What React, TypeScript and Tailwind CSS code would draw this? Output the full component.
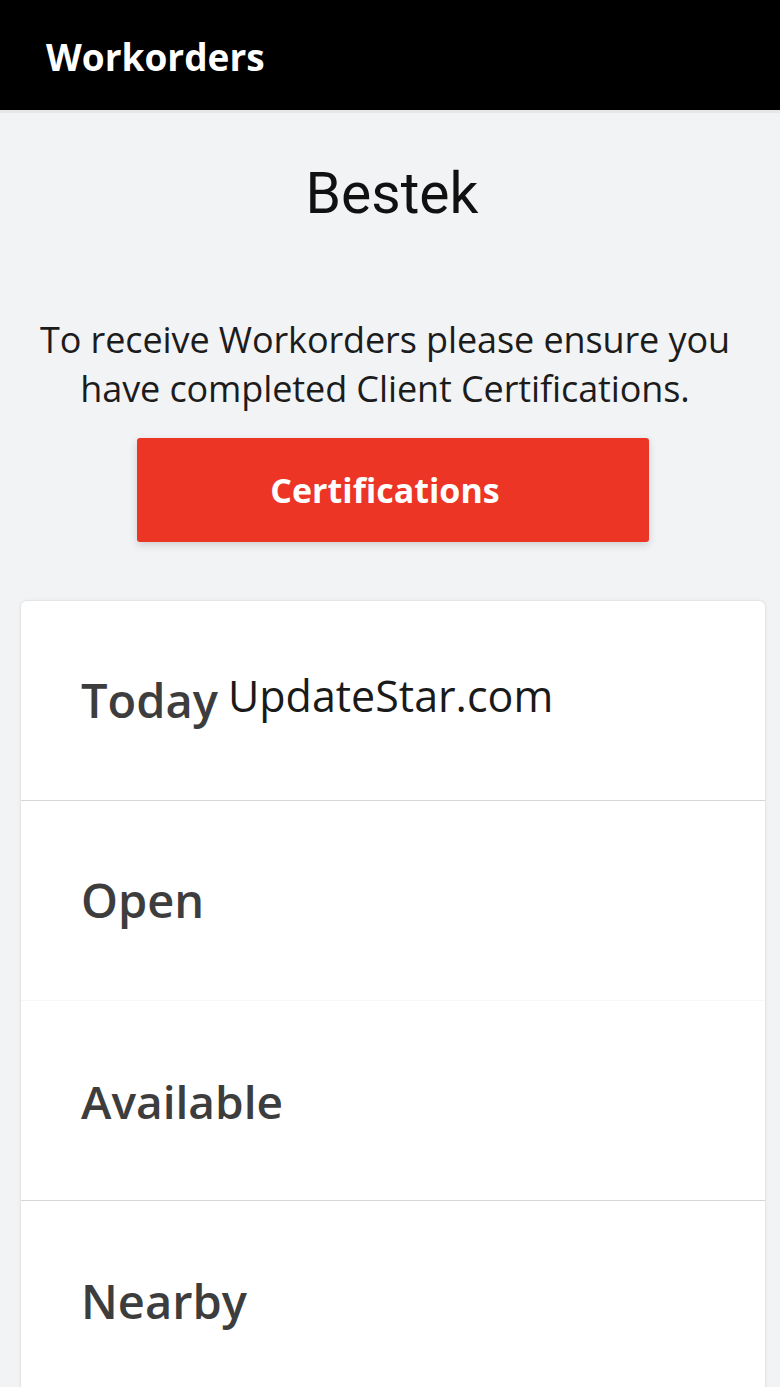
import React from "react";

const open = { fontFamily: '"Open Sans", "Noto Sans", sans-serif' };

function Row({ children, divider, faint }: { children: React.ReactNode; divider?: boolean; faint?: boolean }) {
  return (
    <div
      className={
        "h-[200px] flex items-center pl-[60px] " +
        (divider ? "border-b border-[#d6d6d6]" : faint ? "border-b border-[#f7f7f7]" : "")
      }
    >
      {children}
    </div>
  );
}

export default function App() {
  return (
    <div className="w-[780px] h-[1387px] overflow-hidden bg-[#f2f3f5]" style={open}>
      <header className="h-[113px] bg-black flex items-center pl-[46px] pt-[2px] border-b-[3px] border-[#e6e7e9]">
        <h1 className="text-white font-bold text-[37px] leading-none">Workorders</h1>
      </header>
      <div className="flex flex-col items-center">
        <h2
          className="mt-[52px] ml-[4px] text-[57px] leading-none text-[#111111]"
          style={{ fontFamily: 'Roboto, "Liberation Sans", sans-serif' }}
        >
          Bestek
        </h2>
        <p className="mt-[93px] mr-[10px] text-[36px] leading-[49px] text-[#1c1c1c] text-center tracking-[-0.1px]">
          To receive Workorders please ensure you
          <br />
          have completed Client Certifications.
        </p>
        <button className="mt-[25px] ml-[6px] w-[512px] h-[104px] pr-[16px] bg-[#ec3525] rounded-[3px] shadow-[0_3px_8px_rgba(0,0,0,0.15)] text-white font-bold text-[34px]">
          Certifications
        </button>
      </div>
      <div className="mt-[58px] ml-[20px] w-[746px] bg-white rounded-t-[7px] border border-[#e4e5e7] shadow-[0_0_4px_rgba(0,0,0,0.04)]">
        <Row divider>
          <span className="font-semibold text-[47px] text-[#3d3d3d] leading-none">Today</span>
          <span className="ml-[10px] text-[43px] text-[#1a1a1a] leading-none -mt-[10px]">UpdateStar.com</span>
        </Row>
        <Row faint>
          <span className="font-semibold text-[47px] text-[#3d3d3d] leading-none">Open</span>
        </Row>
        <Row divider>
          <span className="font-semibold text-[46px] text-[#3d3d3d] leading-none">Available</span>
        </Row>
        <Row>
          <span className="font-semibold text-[47px] text-[#3d3d3d] leading-none">Nearby</span>
        </Row>
      </div>
    </div>
  );
}
